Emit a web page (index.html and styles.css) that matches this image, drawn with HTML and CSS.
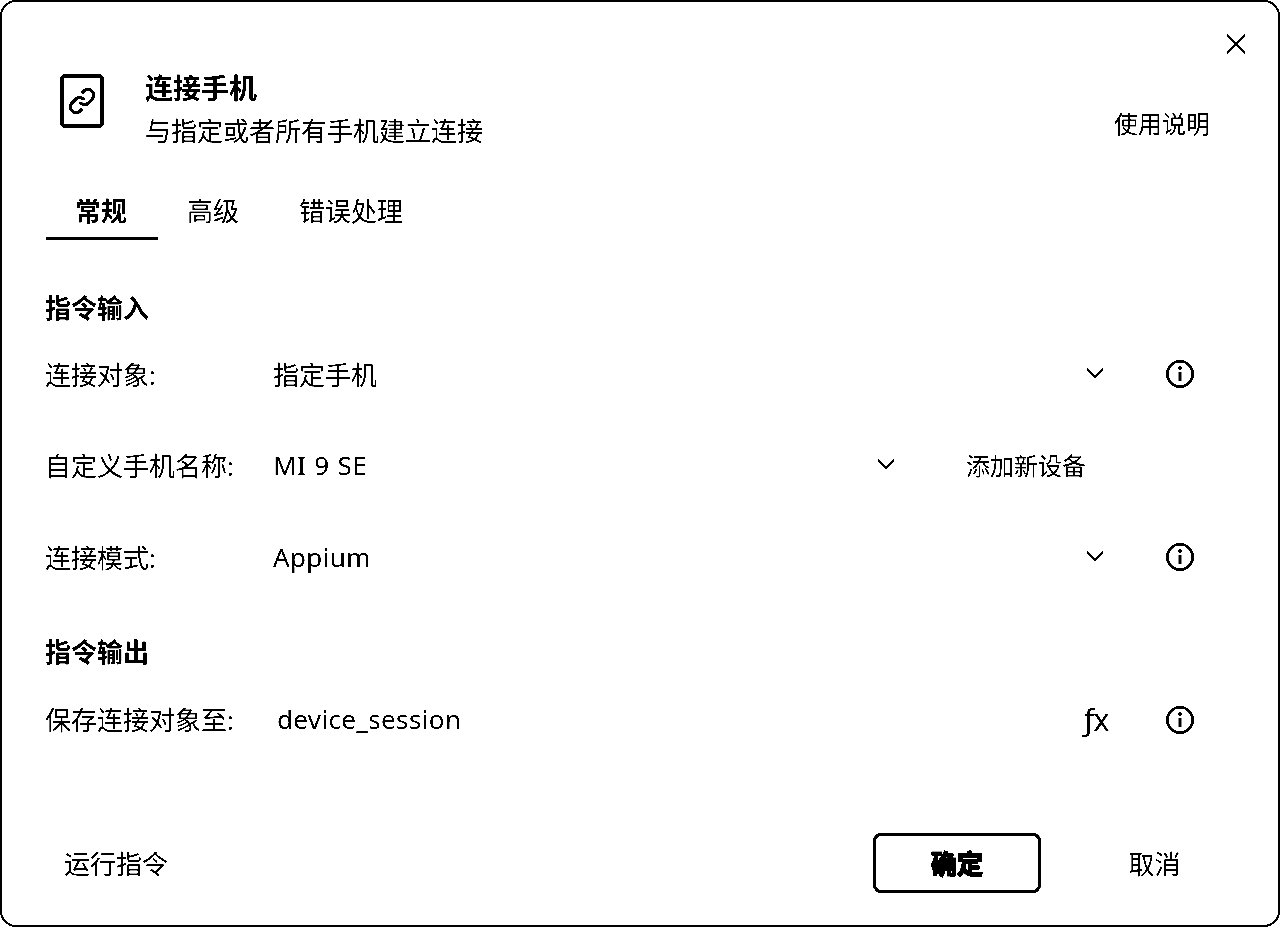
FILE: index.html
```html
<!DOCTYPE html>
<html>

<head>
    <meta charset="utf-8">
    <title>连接手机</title>
    <link rel="stylesheet" href="styles.css">
</head>

<body>
    <div class="dialog">
        <button class="close">
            <svg width="20" height="20" viewBox="0 0 20 20">
                <path d="M1 1L19 19M19 1L1 19" class="line" />
            </svg>
        </button>

        <div class="header">
            <svg class="header-icon" width="44" height="54" viewBox="0 0 44 54">
                <rect x="2" y="2" width="40" height="50" rx="3" class="frame" />
                <g transform="translate(8 13) scale(1.17)">
                    <path d="M10 13a5 5 0 0 0 7.54.54l3-3a5 5 0 0 0-7.07-7.07l-1.72 1.71" class="chain" />
                    <path d="M14 11a5 5 0 0 0-7.54-.54l-3 3a5 5 0 0 0 7.07 7.07l1.71-1.71" class="chain" />
                </g>
            </svg>
            <div class="header-text">
                <div class="title">连接手机</div>
                <div class="subtitle">与指定或者所有手机建立连接</div>
            </div>
            <div class="help">使用说明</div>
        </div>

        <div class="tabs">
            <div class="tab active">常规</div>
            <div class="tab">高级</div>
            <div class="tab">错误处理</div>
        </div>

        <div class="section first">指令输入</div>
        <div class="row">
            <div class="label">连接对象:</div>
            <div class="value">指定手机</div>
            <svg class="chevron" width="18" height="10" viewBox="0 0 18 10"><path d="M1 1L9 9L17 1" class="line" /></svg>
            <svg class="info" width="28" height="28" viewBox="0 0 28 28">
                <circle cx="14" cy="14" r="12.7" class="line" />
                <path d="M14 12V21" class="stem" />
                <circle cx="14" cy="8" r="1.8" />
            </svg>
        </div>
        <div class="row">
            <div class="label">自定义手机名称:</div>
            <div class="value latin">MI 9 SE</div>
            <svg class="chevron" width="18" height="10" viewBox="0 0 18 10"><path d="M1 1L9 9L17 1" class="line" /></svg>
            <div class="add">添加新设备</div>
        </div>
        <div class="row">
            <div class="label">连接模式:</div>
            <div class="value latin">Appium</div>
            <svg class="chevron" width="18" height="10" viewBox="0 0 18 10"><path d="M1 1L9 9L17 1" class="line" /></svg>
            <svg class="info" width="28" height="28" viewBox="0 0 28 28">
                <circle cx="14" cy="14" r="12.7" class="line" />
                <path d="M14 12V21" class="stem" />
                <circle cx="14" cy="8" r="1.8" />
            </svg>
        </div>

        <div class="section second">指令输出</div>
        <div class="row output">
            <div class="label">保存连接对象至:</div>
            <div class="value latin variable">device_session</div>
            <div class="fx"><span class="fx-f">ƒ</span>x</div>
            <svg class="info" width="28" height="28" viewBox="0 0 28 28">
                <circle cx="14" cy="14" r="12.7" class="line" />
                <path d="M14 12V21" class="stem" />
                <circle cx="14" cy="8" r="1.8" />
            </svg>
        </div>

        <div class="footer">
            <div class="run">运行指令</div>
            <button class="btn primary">确定</button>
            <button class="btn">取消</button>
        </div>
    </div>
</body>

</html>
```

FILE: styles.css
```css
* {
    box-sizing: border-box;
}

html,
body {
    margin: 0;
    height: 100%;
    background-color: white;
}

body {
    font-family: "Noto Sans", "Noto Sans CJK SC", sans-serif;
    font-size: 26px;
    color: black;
    filter: grayscale(1) contrast(14);
}

.dialog {
    position: relative;
    display: flex;
    flex-direction: column;
    height: 100vh;
    border: 2px solid black;
    border-radius: 16px;
    background-color: white;
}

.line {
    fill: none;
    stroke: black;
    stroke-width: 2.6;
}

.close {
    position: absolute;
    top: 32px;
    right: 32px;
    padding: 0;
    border: none;
    background: none;
    line-height: 0;
}

.header {
    display: flex;
    height: 84px;
    margin-top: 66px;
    padding: 0 68px 0 58px;
}

.header-icon {
    margin-top: 6px;
    margin-right: 41px;
}

.frame {
    fill: none;
    stroke: black;
    stroke-width: 4;
}

.chain {
    fill: none;
    stroke: black;
    stroke-width: 2.8;
}

.header-text {
    flex: 1;
}

.title {
    margin-bottom: 2px;
    font-size: 28px;
    font-weight: 700;
    line-height: 40px;
}

.subtitle {
    line-height: 42px;
}

.help {
    align-self: flex-end;
    margin-bottom: 7px;
    font-size: 24px;
    line-height: 42px;
}

.tabs {
    display: flex;
    margin-top: 30px;
    padding-left: 44px;
}

.tab {
    padding: 7px 31px 4px 29px;
    line-height: 44px;
    border-bottom: 3px solid transparent;
}

.tab.active {
    font-weight: 700;
    border-bottom-color: black;
}

.section {
    padding-left: 43px;
    font-weight: 700;
    line-height: 40px;
}

.section.first {
    margin-top: 48px;
}

.section.second {
    margin-top: 29px;
    margin-bottom: 3px;
}

.row {
    display: flex;
    align-items: center;
    height: 91.5px;
    padding: 0 84px 0 43px;
}

.label {
    width: 228px;
    flex-shrink: 0;
}

.row.output .label,
.row.output .value {
    margin-top: -2px;
}

.value {
    flex: 1;
}

.value.latin {
    letter-spacing: 0.36px;
    word-spacing: 1px;
}

.value.variable {
    padding-left: 4px;
}

.chevron {
    margin-top: -2px;
}

.chevron + .info {
    margin-left: 62px;
}

.stem {
    stroke: black;
    stroke-width: 3;
}

.add {
    width: 228px;
    margin-top: -2px;
    margin-left: 71px;
    font-size: 24px;
}

.fx {
    width: 28px;
    margin-right: 54px;
    font-size: 30px;
    line-height: 1;
    white-space: nowrap;
}

.fx-f {
    font-family: "DejaVu Sans", sans-serif;
    letter-spacing: -1px;
}

.footer {
    display: flex;
    align-items: center;
    margin-top: auto;
    margin-bottom: 32px;
    padding: 0 40px 0 62px;
}

.run {
    flex: 1;
}

.btn {
    width: 167px;
    height: 60px;
    padding: 0;
    border: none;
    background: none;
    color: black;
    font: inherit;
}

.btn.primary {
    width: 168px;
    margin-right: 30px;
    border: 3px solid black;
    border-radius: 8px;
    font-weight: 700;
    -webkit-text-stroke: 1.6px black;
}
```
